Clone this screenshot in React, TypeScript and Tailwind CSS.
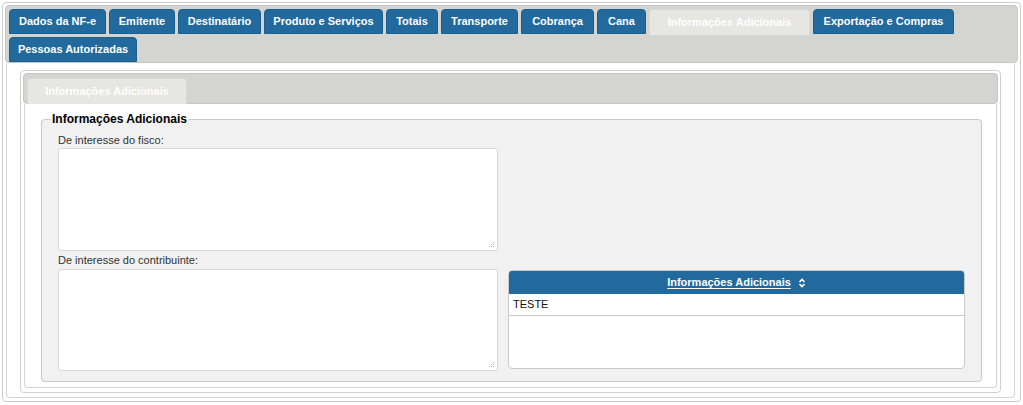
import React from "react";

const tabs: [string, number][] = [
  ["Dados da NF-e", 97],
  ["Emitente", 66],
  ["Destinatário", 83],
  ["Produto e Serviços", 119],
  ["Totais", 52],
  ["Transporte", 77],
  ["Cobrança", 73],
  ["Cana", 49],
  ["Informações Adicionais", 161],
  ["Exportação e Compras", 141],
];

function Tab({ label, width, active }: { label: string; width: number; active?: boolean }) {
  return (
    <div
      style={{ width }}
      className={
        active
          ? "h-[26px] shrink-0 rounded-t-[4px] border border-b-0 border-[#d9d9d5] bg-[#e6e6e2] text-white text-[11px] font-bold flex items-center justify-center"
          : "h-[25px] shrink-0 rounded-t-[4px] border border-[#1b5f8f] bg-[#22699d] text-white text-[11px] font-bold flex items-center justify-center"
      }
    >
      {label}
    </div>
  );
}

function Grip() {
  return (
    <svg className="absolute right-[3px] bottom-[3px]" width="6" height="6" viewBox="0 0 6 6">
      <rect x="4" y="0" width="1" height="1" fill="#b5b5b5" />
      <rect x="2" y="2" width="1" height="1" fill="#b5b5b5" />
      <rect x="4" y="2" width="1" height="1" fill="#b5b5b5" />
      <rect x="0" y="4" width="1" height="1" fill="#b5b5b5" />
      <rect x="2" y="4" width="1" height="1" fill="#b5b5b5" />
      <rect x="4" y="4" width="1" height="1" fill="#b5b5b5" />
    </svg>
  );
}

function Area({ h }: { h: number }) {
  return (
    <div className="relative w-[440px]" style={{ height: h }}>
      <textarea className="block w-full h-full resize-none bg-white border border-[#d8d8d8] rounded-[3px]" />
      <Grip />
    </div>
  );
}

export default function App() {
  return (
    <div
      className="w-[1023px] h-[405px] bg-white pt-[2px] pl-[2px]"
      style={{ fontFamily: '"Liberation Sans", Arial, sans-serif' }}
    >
      <div className="w-[1019px] h-[400px] border border-[#cdcdcd] rounded-[4px] p-[2px] flex flex-col">
        {/* top tab header */}
        <div className="h-[58px] rounded-[4px] border border-[#c6c7c2] bg-[#d4d5d0] pt-[3px] pl-[3px] flex flex-col gap-[2px]">
          <div className="flex gap-[3px]">
            {tabs.map(([l, w]) => (
              <Tab key={l} label={l} width={w} active={l === "Informações Adicionais"} />
            ))}
          </div>
          <div className="flex">
            <Tab label="Pessoas Autorizadas" width={128} />
          </div>
        </div>
        {/* panel */}
        <div className="flex-1 ml-[1px] mr-[3px] mb-[1px] border border-t-0 border-[#d4d4d4] rounded-b-[4px] pt-[7px] pl-[13px] pr-[13px] pb-[4px] flex">
          <div className="flex-1 border border-[#cfcfcf] rounded-[4px] pt-[2px] px-[2px] pb-[4px] flex flex-col">
            <div className="h-[31px] rounded-[4px] border border-[#c6c7c2] bg-[#d4d5d0] pt-[4px] pl-[3px] flex">
              <Tab label="Informações Adicionais" width={160} active />
            </div>
            <div className="flex-1 ml-[1px] mr-[1px] border border-t-0 border-[#d4d4d4] rounded-b-[4px] pt-[8px] pl-[16px] pr-[14px] pb-[5px] flex flex-col">
              <fieldset className="flex-1 border border-[#c9c9c9] rounded-[4px] bg-[#f1f1f1] pl-[16px] pr-[16px] pt-[2px]">
                <legend className="ml-[-8px] px-[2px] text-[12px] leading-[14px] font-bold text-black">
                  Informações Adicionais
                </legend>
                <div className="text-[11px] leading-[13px] text-[#333] pt-[6px]">De interesse do fisco:</div>
                <div className="mt-[1px]">
                  <Area h={103} />
                </div>
                <div className="mt-[3px] flex items-start gap-[10px]">
                  <div className="flex flex-col">
                    <div className="text-[11px] leading-[13px] text-[#333]">De interesse do contribuinte:</div>
                    <div className="mt-[2px]">
                      <Area h={102} />
                    </div>
                  </div>
                  <div className="mt-[16px] w-[457px] h-[99px] border border-[#cacaca] rounded-[4px] bg-white overflow-hidden">
                    <div className="h-[23px] bg-[#22699d] flex items-center justify-center gap-[7px] text-white text-[11px] font-bold">
                      <span className="underline underline-offset-2">Informações Adicionais</span>
                      <svg width="8" height="10" viewBox="0 0 8 10" fill="none" stroke="white" strokeWidth="1.6">
                        <path d="M1.5 4 L4 1.5 L6.5 4" />
                        <path d="M1.5 6 L4 8.5 L6.5 6" />
                      </svg>
                    </div>
                    <div className="h-[22px] border-b border-[#c6c6c6] flex items-center pl-[4px] text-[11px] text-[#111]">
                      TESTE
                    </div>
                  </div>
                </div>
              </fieldset>
            </div>
          </div>
        </div>
      </div>
    </div>
  );
}
